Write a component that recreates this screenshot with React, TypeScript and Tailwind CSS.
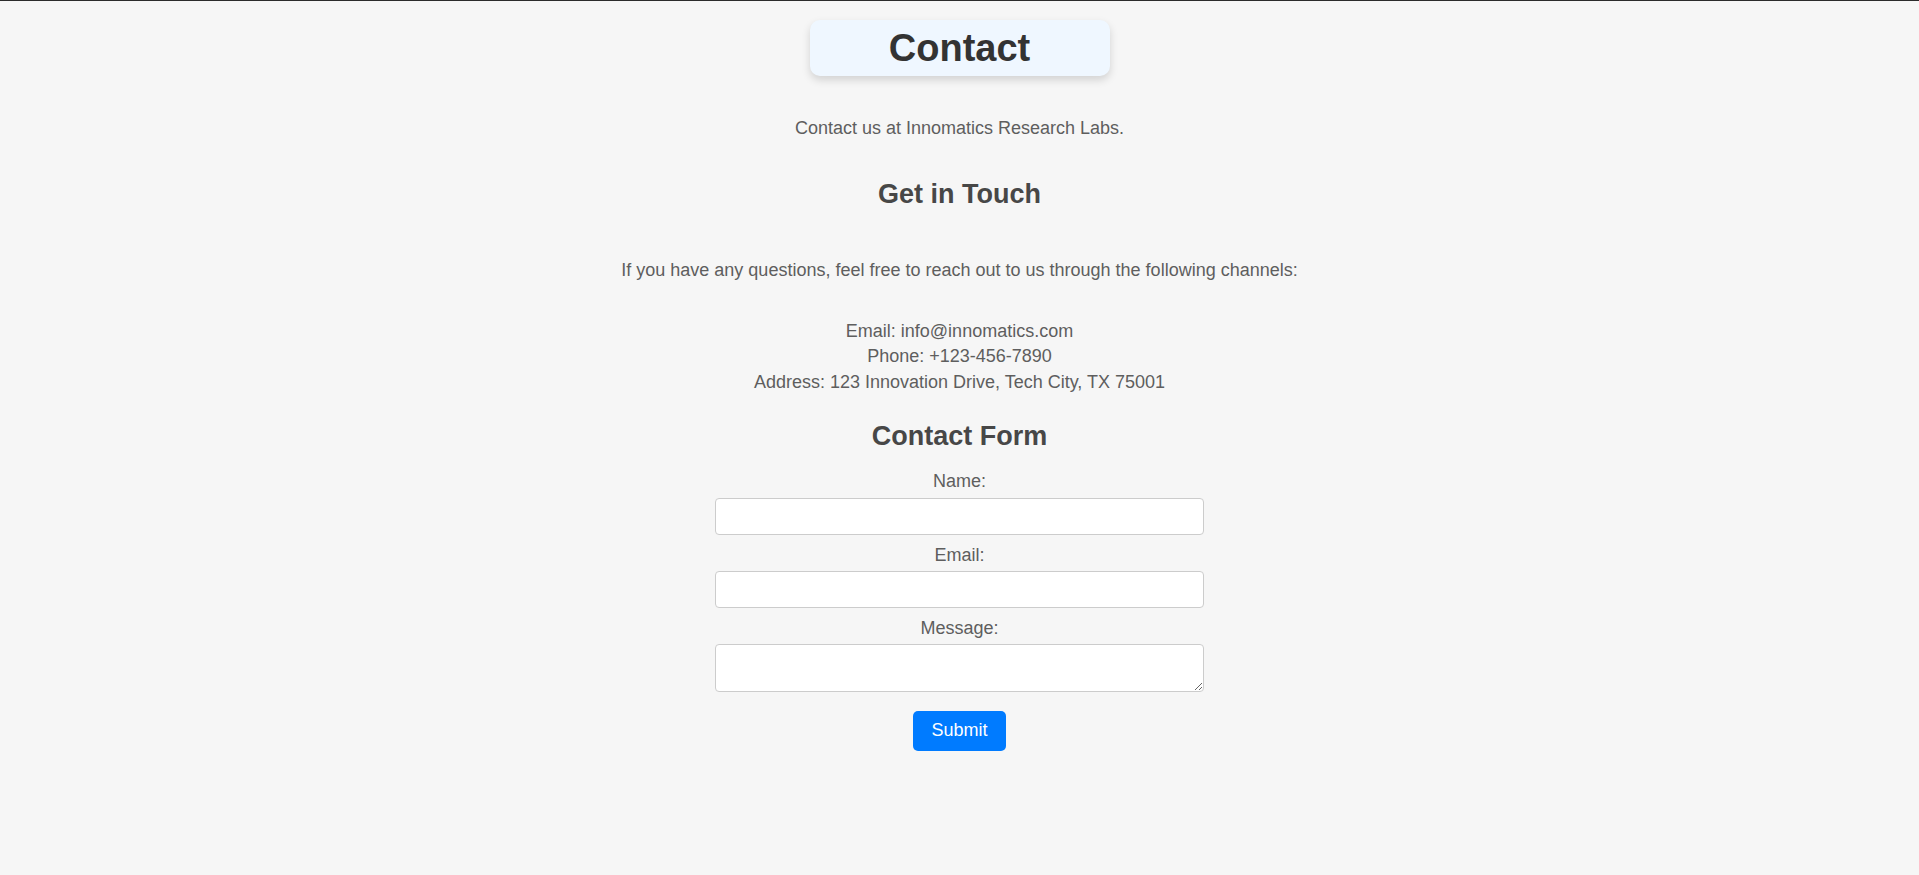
import React from "react";

// Contact details shown under "Get in Touch"
const details = [
  "Email: info@innomatics.com",
  "Phone: +123-456-7890",
  "Address: 123 Innovation Drive, Tech City, TX 75001",
];

const fields = [
  { label: "Name:", id: "name", type: "text" },
  { label: "Email:", id: "email", type: "email" },
];

const App = () => {
  return (
    <div className="min-h-screen w-full bg-[#f6f6f6] border-t border-[#2b2b2b] font-['Liberation_Sans',Arial,sans-serif] text-[18px] leading-[25.5px] text-[#5e5e5e]">
      <div className="flex flex-col items-center text-center">
        {/* Title */}
        <div className="mt-[19px] w-[300px] h-[56px] flex items-center justify-center rounded-[10px] bg-[#eff7ff] shadow-[0_4px_8px_rgba(0,0,0,0.15)]">
          <h1 className="text-[38px] leading-[44px] font-bold text-[#333]">Contact</h1>
        </div>

        <p className="mt-[40px]">Contact us at Innomatics Research Labs.</p>

        <h2 className="mt-[33px] text-[27px] leading-[38px] font-bold text-[#474747]">Get in Touch</h2>

        <p className="mt-[45px]">
          If you have any questions, feel free to reach out to us through the following channels:
        </p>

        <div className="mt-[35.5px] flex flex-col">
          {details.map((line, index) => (
            <span key={index}>{line}</span>
          ))}
        </div>

        <h2 className="mt-[22px] text-[27px] leading-[38px] font-bold text-[#474747]">Contact Form</h2>

        {/* Form */}
        <form className="mt-[14px] w-[489px] flex flex-col items-center" onSubmit={(e) => e.preventDefault()}>
          {fields.map((f, index) => (
            <div key={f.id} className={`w-full flex flex-col items-center ${index > 0 ? "mt-[8px]" : ""}`}>
              <label htmlFor={f.id}>{f.label}</label>
              <input
                id={f.id}
                type={f.type}
                className="mt-[3px] w-full h-[37px] px-2 rounded-[4px] border border-[#ccc] bg-white outline-none"
              />
            </div>
          ))}
          <div className="mt-[8px] w-full flex flex-col items-center">
            <label htmlFor="message">Message:</label>
            <textarea
              id="message"
              className="mt-[2px] w-full h-[48px] px-2 py-1 rounded-[4px] border border-[#ccc] bg-white outline-none"
            />
          </div>
          <button
            type="submit"
            className="mt-[19px] w-[93px] h-[40px] rounded-[5px] bg-[#007bff] text-white text-[18px]"
          >
            Submit
          </button>
        </form>
      </div>
    </div>
  );
};

export default App;
